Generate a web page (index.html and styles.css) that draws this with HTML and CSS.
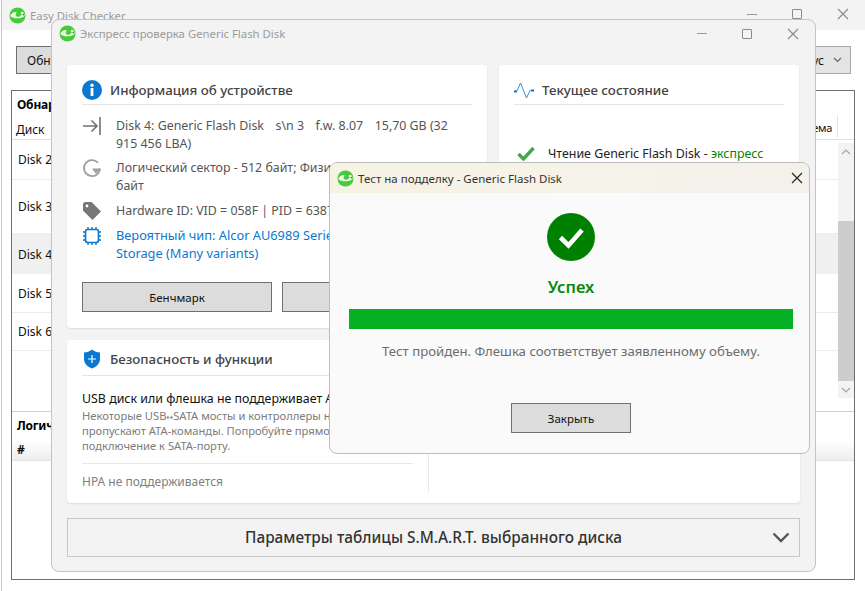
FILE: index.html
```html
<!DOCTYPE html>
<html lang="ru">
<head>
<meta charset="utf-8">
<title>Easy Disk Checker</title>
<link rel="stylesheet" href="styles.css">
</head>
<body>
<svg class="defs" width="0" height="0">
  <defs>
    <symbol id="logo" viewBox="0 0 18 18">
      <circle cx="9" cy="9" r="8.500" fill="#45cc3a"/>
      <path d="M1.200 9.500C2.500 6.500 5.500 5 8 5.500L7 8.500C7.500 10.500 10 11 11.500 9.800L13 8.500L16.800 8C17 10 14 11.500 11 11.800C7 12.300 3.500 11.500 1.200 9.500Z" fill="#f2f9ec"/>
      <circle cx="14" cy="6.500" r="1.500" fill="#f2f9ec"/>
      <circle cx="15.300" cy="8.200" r="0.800" fill="#3f7a3f"/>
    </symbol>
    <symbol id="cross" viewBox="0 0 12 12">
      <path d="M1 1l10 10M11 1L1 11" fill="none" stroke="currentColor" stroke-width="1.100"/>
    </symbol>
  </defs>
</svg>

<div class="main">
  <header class="titlebar main-title">
    <svg class="logo"><use href="#logo"/></svg>
    <span class="win-name">Easy Disk Checker</span>
    <div class="controls main-controls">
      <span class="ctl-min"></span><span class="ctl-max"></span><svg class="ctl-x"><use href="#cross"/></svg>
    </div>
  </header>
  <div class="toolbar">
    <button class="tool-btn">Обновить</button>
    <div class="combo">Статус <svg width="9" height="6" viewBox="0 0 9 6"><path d="M1 1l3.500 3.500L8 1" fill="none" stroke="#666" stroke-width="1.200"/></svg></div>
  </div>
  <div class="frame">
    <div class="sec-title">Обнаруженные диски</div>
    <div class="list">
      <div class="list-head"><span>Диск</span><span class="last-col">Схема</span></div>
      <div class="list-body">
        <div class="rows">
          <div class="row r1">Disk 2</div>
          <div class="row r2">Disk 3</div>
          <div class="row sel">Disk 4</div>
          <div class="row r3">Disk 5</div>
          <div class="row r4">Disk 6</div>
        </div>
        <div class="scrollbar">
          <svg width="16" height="18" viewBox="0 0 16 18"><path d="M4 11l4-4 4 4" fill="none" stroke="#a6a6a6" stroke-width="1.200"/></svg>
          <div class="thumb"></div>
          <svg class="down" width="16" height="16" viewBox="0 0 16 16"><path d="M4 6l4 4 4-4" fill="none" stroke="#a6a6a6" stroke-width="1.200"/></svg>
        </div>
      </div>
    </div>
    <div class="sec-title logical">Логические диски</div>
    <div class="part-head">#</div>
  </div>
</div>

<section class="win express">
  <header class="titlebar express-title">
    <svg class="logo"><use href="#logo"/></svg>
    <span class="win-name">Экспресс проверка Generic Flash Disk</span>
    <div class="controls">
      <span class="ctl-min"></span><span class="ctl-max"></span><svg class="ctl-x"><use href="#cross"/></svg>
    </div>
  </header>
  <div class="express-body">
    <div class="top-cards">
      <article class="card device">
        <h2 class="card-title">
          <svg class="head-ic" width="20" height="20" viewBox="0 0 20 20"><circle cx="10" cy="10" r="10" fill="#0a78cf"/><rect x="8.600" y="8" width="2.800" height="8" fill="#fff"/><circle cx="10" cy="5.300" r="1.700" fill="#fff"/></svg>
          Информация об устройстве
        </h2>
        <div class="info">
          <svg class="info-ic" width="20" height="20" viewBox="0 0 20 20"><path d="M1 10h14M9.500 4.500L15 10l-5.500 5.500" fill="none" stroke="#707070" stroke-width="1.600"/><path d="M18 1v18" stroke="#707070" stroke-width="1.600"/></svg>
          <p>Disk 4: Generic Flash Disk<span class="gap"></span>s\n 3<span class="gap"></span>f.w. 8.07<span class="gap"></span>15,70 GB (32<br>915 456 LBA)</p>
        </div>
        <div class="info">
          <svg class="info-ic" width="20" height="20" viewBox="0 0 20 20"><path d="M16 4.800A8 8 0 1 0 18 10.500" fill="none" stroke="#a0a0a0" stroke-width="1.800"/><path d="M10 10.500h8.500L14 16z" fill="#a0a0a0"/></svg>
          <p>Логический сектор - 512 байт; Физический сектор - 512<br>байт</p>
        </div>
        <div class="info">
          <svg class="info-ic" width="20" height="20" viewBox="0 0 20 20"><path d="M1 3.500Q1 1 3.500 1H9.500L19 10.500 10.500 19 1 9.500Z" fill="#777"/><circle cx="5" cy="5" r="1.400" fill="#fff"/></svg>
          <p>Hardware ID: VID = 058F | PID = 6387</p>
        </div>
        <div class="info chip">
          <svg class="info-ic" width="20" height="20" viewBox="0 0 20 20"><rect x="3.500" y="3.500" width="13" height="13" rx="2.200" fill="none" stroke="#0a78cf" stroke-width="1.700"/><path d="M6 1v2M10 1v2M14 1v2M6 17v2M10 17v2M14 17v2M1 6h2M1 10h2M1 14h2M17 6h2M17 10h2M17 14h2" stroke="#0a78cf" stroke-width="1.400"/></svg>
          <p>Вероятный чип: Alcor AU6989 Series USB Mass<br>Storage (Many variants)</p>
        </div>
        <div class="btn-row">
          <button class="btn">Бенчмарк</button>
          <button class="btn">Тест на подделку</button>
        </div>
      </article>
      <article class="card state">
        <h2 class="card-title">
          <svg class="head-ic pulse" width="20" height="20" viewBox="0 0 20 20"><path d="M1 11h2L6.500 3l6 15 3.500-7.500h3" fill="none" stroke="#3a93dc" stroke-width="1"/><path d="M0 11.500h3M17 10.500h3" stroke="#0a78cf" stroke-width="2"/></svg>
          Текущее состояние
        </h2>
        <div class="state-line">
          <svg width="18" height="15" viewBox="0 0 18 15"><path d="M1.500 8l5 5L16.500 2" fill="none" stroke="#46a64e" stroke-width="3.400"/></svg>
          <p>Чтение Generic Flash Disk - <span class="green">экспресс</span></p>
        </div>
      </article>
    </div>
    <article class="card security">
      <div class="sec-left">
        <h2 class="card-title">
          <svg class="head-ic" width="20" height="20" viewBox="0 0 20 20"><path d="M10 0.500C12.500 2.500 15 3.200 18 3.500V10C18 14.500 14.500 17.800 10 19.500C5.500 17.800 2 14.500 2 10V3.500C5 3.200 7.500 2.500 10 0.500Z" fill="#0a78cf"/><path d="M6 10h8M10 6v8" stroke="#fff" stroke-width="1.200"/></svg>
          Безопасность и функции
        </h2>
        <p class="warn">USB диск или флешка не поддерживает ATA passthrough</p>
        <p class="note">Некоторые USB<span class="arrow">↔</span>SATA мосты и контроллеры не<br>пропускают ATA-команды. Попробуйте прямое<br>подключение к SATA-порту.</p>
        <p class="hpa">HPA не поддерживается</p>
      </div>
      <div class="sec-divider"></div>
    </article>
    <div class="smart">
      <span>Параметры таблицы S.M.A.R.T. выбранного диска</span>
      <svg width="18" height="11" viewBox="0 0 18 11"><path d="M1.500 1.500L9 9l7.500-7.500" fill="none" stroke="#555" stroke-width="2.400"/></svg>
    </div>
  </div>
</section>

<section class="win dialog">
  <header class="titlebar dialog-title">
    <svg class="logo"><use href="#logo"/></svg>
    <span class="dialog-name">Тест на подделку - Generic Flash Disk</span>
    <svg class="dialog-x"><use href="#cross"/></svg>
  </header>
  <div class="dialog-body">
    <svg width="48" height="48" viewBox="0 0 48 48"><circle cx="24" cy="24" r="24" fill="#008000"/><path d="M13.500 24.500l8 8L35 17" fill="none" stroke="#fff" stroke-width="4.600"/></svg>
    <h1 class="result">Успех</h1>
    <div class="progress"></div>
    <p class="message">Тест пройден. Флешка соответствует заявленному объему.</p>
    <button class="btn close-btn">Закрыть</button>
  </div>
</section>
</body>
</html>
```

FILE: styles.css
```css
* { box-sizing: border-box; }
html, body { margin: 0; height: 100%; }
body {
  width: 865px;
  height: 591px;
  overflow: hidden;
  position: relative;
  background: #fff;
  font-family: "Noto Sans", "Open Sans", "Liberation Sans", sans-serif;
  color: #111;
}
p, h1, h2 { margin: 0; font-weight: 400; }
.defs { position: absolute; }

.logo { width: 17px; height: 17px; flex: none; }
.titlebar { display: flex; align-items: center; }
.controls {
  margin-left: auto;
  display: flex;
  align-items: center;
  color: #8a8a8a;
}
.ctl-min { width: 10px; height: 1px; background: #9a9a9a; margin-right: 35px; }
.ctl-max { width: 10px; height: 10px; border: 1px solid #8a8a8a; margin-right: 35px; border-radius: 1px; }
.ctl-x { width: 12px; height: 12px; color: #8a8a8a; }

/* main window */
.main {
  width: 864px;
  height: 591px;
  margin-left: 1px;
  border-left: 1px solid #c8c8c8;
  display: flex;
  flex-direction: column;
  background: #fff;
}
.main-title {
  height: 30px;
  flex: none;
  background: #f3f3f3;
  padding: 0 16px 0 7px;
}
.win-name { font-size: 11.350px; color: #9b9b9b; margin-left: 4px; }
.main-controls { margin-top: -2px; }
.toolbar {
  height: 28px;
  margin: 16px 14px 0 14px;
  display: flex;
  justify-content: space-between;
  flex: none;
}
.tool-btn {
  width: 90px;
  height: 28px;
  background: #dcdcdc;
  border: 1px solid #707070;
  font: 12px "Noto Sans", sans-serif;
  color: #111;
  text-align: left;
  padding-left: 10px;
}
.combo {
  width: 120px;
  height: 28px;
  background: #e4e4e4;
  border: 1px solid #a8a8a8;
  font-size: 12px;
  display: flex;
  align-items: center;
  justify-content: flex-end;
  gap: 9px;
  padding-right: 8px;
}
.frame {
  margin: 16px 10px 0 9px;
  height: 490px;
  border: 1px solid #707070;
  display: flex;
  flex-direction: column;
  flex: none;
}
.sec-title {
  font-size: 12px;
  font-weight: 700;
  color: #000;
  height: 28px;
  padding: 5px 0 0 5px;
  flex: none;
  letter-spacing: -0.2px;
}
.list { height: 293px; flex: none; border-bottom: 1px solid #d0d0d0; display: flex; flex-direction: column; }
.list-head {
  height: 21px;
  display: flex;
  justify-content: space-between;
  font-size: 12px;
  padding: 2px 0 0 4px;
  border-bottom: 1px solid #e0e0e0;
  flex: none;
  background: #fff;
}
.last-col {
  width: 42px;
  height: 22px;
  margin-top: -6px;
  padding: 5px 5px 0 0;
  text-align: right;
  font-size: 11px;
  letter-spacing: -0.3px;
  border-right: 1px solid #e4e4e4;
  margin-right: 16px;
}
.list-body { display: flex; flex: 1; min-height: 0; }
.rows { flex: 1; font-size: 12px; }
.row { display: flex; align-items: center; padding-left: 6px; border-bottom: 1px solid #ececec; }
.r1 { height: 40px; }
.r2 { height: 54px; }
.sel { height: 40px; background: #f0f0f0; border-bottom: 0; }
.r3 { height: 39px; }
.r4 { height: 38px; }
.scrollbar {
  width: 16px;
  height: 255px;
  margin-top: 3px;
  background: #f3f3f3;
  display: flex;
  flex-direction: column;
  align-items: center;
  flex: none;
}
.thumb { width: 16px; height: 160px; margin-top: 60px; background: #cdcdcd; flex: none; }
.down { margin-top: 1px; flex: none; }
.logical { height: 28px; padding-top: 5px; }
.part-head {
  height: 21px;
  padding: 1px 0 0 5px;
  font-size: 12px;
  font-weight: 700;
  background: linear-gradient(#fff, #eeeef1);
  border-bottom: 1px solid #e4e4e4;
  flex: none;
}

/* floating windows */
.win { position: absolute; overflow: hidden; }
.express {
  left: 51px;
  top: 19px;
  width: 765px;
  height: 553px;
  background: #f3f3f3;
  border: 1px solid #c4c4c4;
  border-radius: 8px;
  display: flex;
  flex-direction: column;
}
.express-title { height: 27px; padding: 0 16px 0 7px; flex: none; }
.express-body { padding: 18px 15px 0 15px; display: flex; flex-direction: column; flex: 1; }
.top-cards { display: grid; grid-template-columns: 420px 300px; gap: 12px; }
.card {
  background: #fff;
  border-radius: 4px;
  box-shadow: 0 1px 2px rgba(0, 0, 0, 0.1);
}
.device { height: 263px; padding: 0 15px; }
.state { height: 263px; padding: 0 15px; }
.card-title {
  height: 40px;
  padding-top: 10px;
  display: flex;
  align-items: center;
  gap: 8px;
  font-size: 13.300px;
  font-weight: 500;
  color: #444;
  border-bottom: 1px solid #e4e4e4;
}
.info {
  display: flex;
  gap: 14px;
  font-size: 12.400px;
  line-height: 18px;
  color: #555;
}
.gap { display: inline-block; width: 11.500px; }
.info:nth-of-type(1) { margin-top: 12px; }
.info:nth-of-type(2) { margin-top: 6px; }
.info:nth-of-type(3) { margin-top: 7px; }
.info:nth-of-type(4) { margin-top: 5px; }
.info-ic { flex: none; margin-top: -1px; }
.chip { color: #0a78cf; font-weight: 500; font-size: 12.800px; white-space: nowrap; }
.chip .info-ic { margin-top: 0; }
.btn-row { display: flex; gap: 10px; margin-top: 20px; }
.btn {
  height: 30px;
  flex: 1;
  background: #dcdcdc;
  border: 1px solid #707070;
  font: 11.500px "Noto Sans", sans-serif;
  color: #111;
  padding: 0;
}
.state-line { display: flex; align-items: center; gap: 13px; margin-top: 40px; padding-left: 3px; font-size: 12.400px; color: #222; }
.green { color: #088008; }
.security {
  margin-top: 12px;
  height: 163px;
  display: flex;
  padding: 0 0 0 15px;
}
.sec-left { width: 331px; }
.sec-left .card-title { height: 36px; padding-top: 2px; width: 390px; }
.warn { font-size: 12.400px; color: #111; margin-top: 14px; white-space: nowrap; line-height: 18px; }
.note { font-size: 11.200px; color: #7c7c7c; line-height: 15px; white-space: nowrap; padding-bottom: 10px; border-bottom: 1px solid #e8e8e8; }
.arrow { font-family: "DejaVu Sans", sans-serif; font-size: 8px; line-height: 0; }
.hpa { font-size: 12px; color: #808080; margin-top: 9px; }
.sec-divider { width: 1px; height: 152px; margin-left: 15px; background: #e8e8e8; align-self: flex-start; }
.smart {
  margin: 15px 0 0 0;
  height: 39px;
  border: 1px solid #c8c8c8;
  display: flex;
  align-items: center;
  justify-content: center;
  position: relative;
  font-size: 15.400px;
  font-weight: 500;
  color: #333;
  flex: none;
}
.smart svg { position: absolute; right: 9px; top: 13px; }

.dialog {
  left: 329px;
  top: 162px;
  width: 481px;
  height: 292px;
  background: #fafafa;
  border: 1px solid #bdbdbd;
  border-radius: 8px;
  display: flex;
  flex-direction: column;
}
.dialog-title {
  height: 30px;
  flex: none;
  padding: 0 6px 0 7px;
  background: linear-gradient(90deg, #f6f2e4, #f6f3ea 60%, #f3f1ea);
}
.dialog-name { font-size: 11.500px; color: #333; margin-left: 4px; }
.dialog-x { margin-left: auto; width: 12px; height: 12px; color: #222; }
.dialog-body { display: flex; flex-direction: column; align-items: center; padding: 20px 16px 0 19px; flex: 1; }
.result { font-size: 16.500px; font-weight: 600; color: #0a8a0a; margin-top: 14px; line-height: 24px; }
.progress { width: 444px; height: 20px; background: #06b025; margin-top: 10px; flex: none; }
.message { font-size: 13.200px; color: #6d6d6d; margin-top: 13px; line-height: 18px; white-space: nowrap; }
.close-btn { flex: none; width: 120px; height: 30px; margin-top: 43px; }
```
